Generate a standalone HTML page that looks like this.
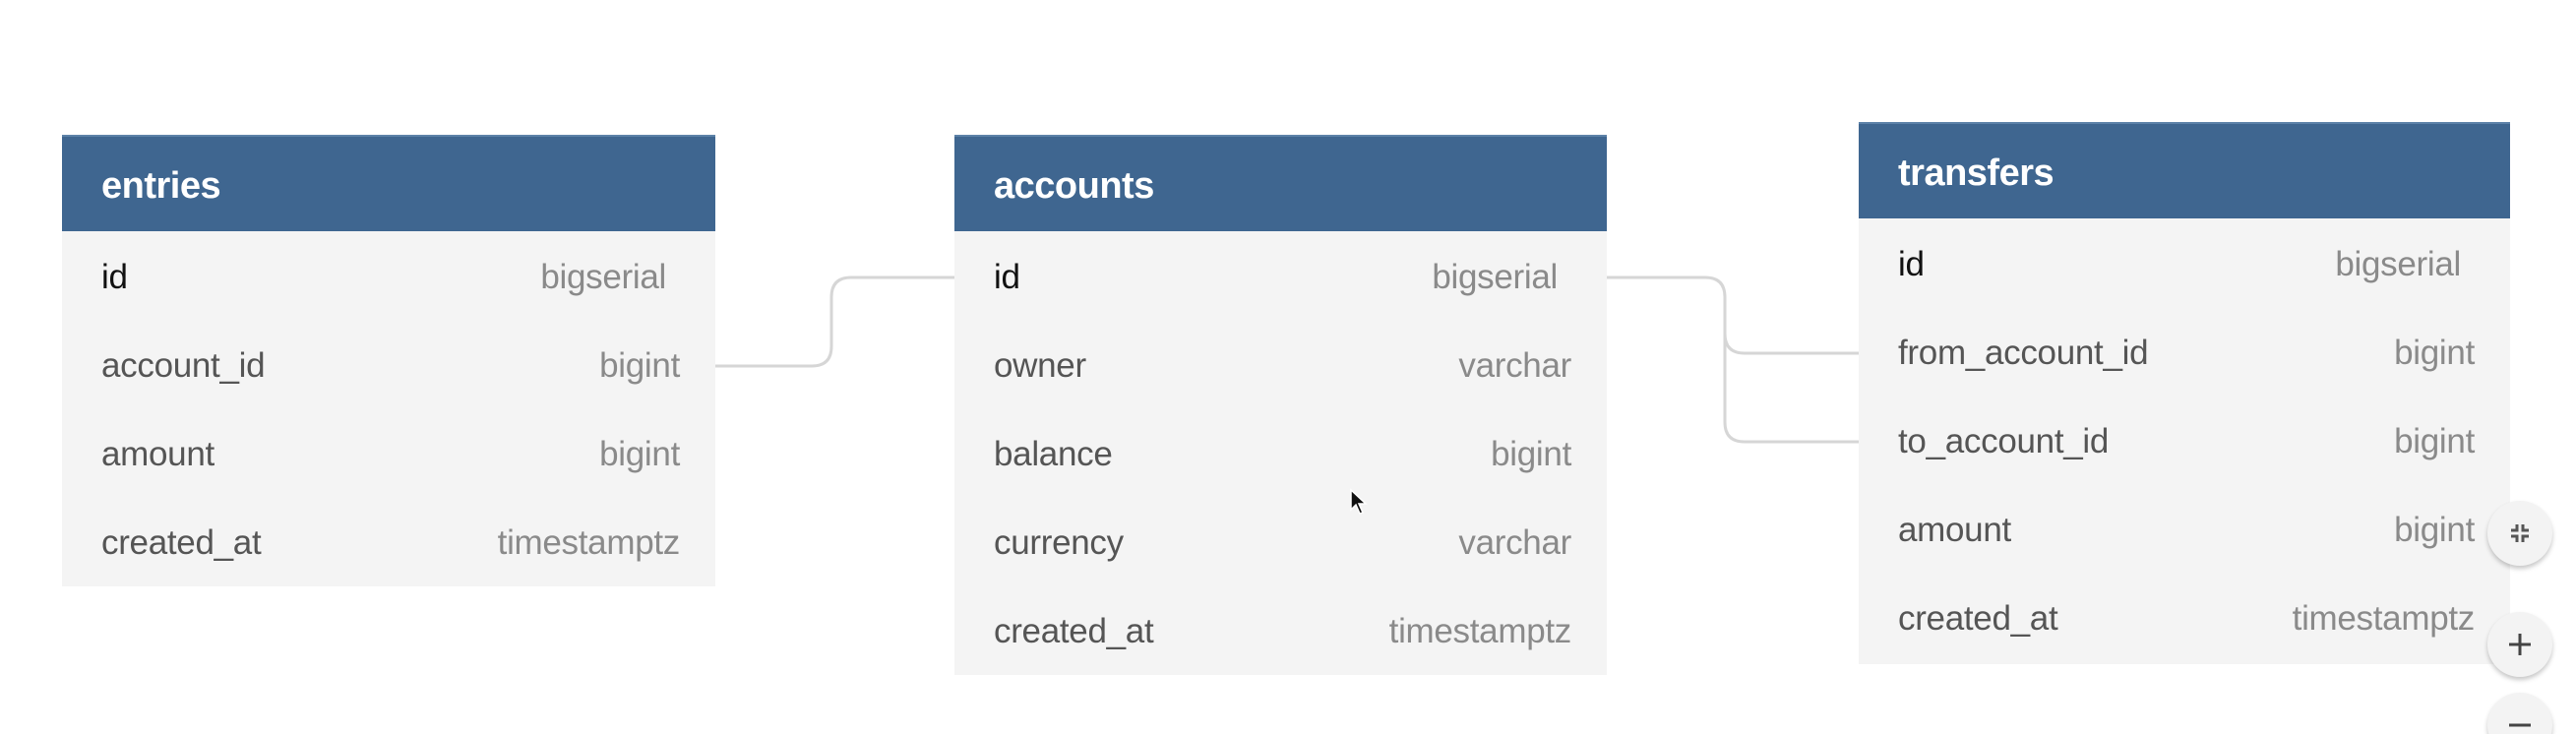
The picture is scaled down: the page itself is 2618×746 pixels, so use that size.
<!DOCTYPE html>
<html><head><meta charset="utf-8"><style>
html,body{margin:0;padding:0;background:#fff;width:2618px;height:746px;overflow:hidden;position:relative;font-family:"Liberation Sans",sans-serif}
.t{position:absolute;background:#f4f4f4}
.h{height:98px;background:#3f6690;color:#fff;font-weight:bold;font-size:38px;line-height:100px;padding-left:40px;box-sizing:border-box;border-top:2px solid #5d82a8;letter-spacing:-0.5px}
.r{height:90px;line-height:94px;font-size:35px;color:#555;padding:0 36px 0 40px;display:flex;justify-content:space-between;letter-spacing:-0.3px}
.r span:last-child{color:#8a8a8a}
.r.k span:first-child{color:#111}
.r.k span:last-child{margin-right:14px}
.c{position:absolute;width:66px;height:66px;border-radius:50%;background:#f3f3f3;box-shadow:0 3px 5px rgba(0,0,0,.22);display:flex;align-items:center;justify-content:center;color:#444;font-size:40px}
</style></head><body>
<svg style="position:absolute;left:0;top:0" width="2618" height="746">
<g fill="none" stroke="#d6d6d6" stroke-width="3">
<path d="M727 372 H825 Q845 372 845 352 V302 Q845 282 865 282 H970"/>
<path d="M1633 282 H1733 Q1753 282 1753 302 V339 Q1753 359 1773 359 H1889"/>
<path d="M1753 330 V429 Q1753 449 1773 449 H1889"/>
</g>
</svg>
<div class="t" style="left:63px;top:137px;width:664px;height:459px">
<div class="h">entries</div>
<div class="r k"><span>id</span><span>bigserial</span></div>
<div class="r"><span>account_id</span><span>bigint</span></div>
<div class="r"><span>amount</span><span>bigint</span></div>
<div class="r"><span>created_at</span><span>timestamptz</span></div>
</div>
<div class="t" style="left:970px;top:137px;width:663px;height:549px">
<div class="h">accounts</div>
<div class="r k"><span>id</span><span>bigserial</span></div>
<div class="r"><span>owner</span><span>varchar</span></div>
<div class="r"><span>balance</span><span>bigint</span></div>
<div class="r"><span>currency</span><span>varchar</span></div>
<div class="r"><span>created_at</span><span>timestamptz</span></div>
</div>
<div class="t" style="left:1889px;top:124px;width:662px;height:551px">
<div class="h">transfers</div>
<div class="r k"><span>id</span><span>bigserial</span></div>
<div class="r"><span>from_account_id</span><span>bigint</span></div>
<div class="r"><span>to_account_id</span><span>bigint</span></div>
<div class="r"><span>amount</span><span>bigint</span></div>
<div class="r"><span>created_at</span><span>timestamptz</span></div>
</div>
<div class="c" style="left:2528px;top:509px"><svg width="24" height="24" viewBox="0 0 24 24" fill="none" stroke="#555" stroke-width="3"><path d="M9 3V9H3M15 3V9H21M9 21V15H3M15 21V15H21"/></svg></div>
<div class="c" style="left:2528px;top:622px"><svg width="26" height="26" viewBox="0 0 26 26" stroke="#444" stroke-width="3"><path d="M13 2V24M2 13H24"/></svg></div>
<div class="c" style="left:2528px;top:704px"><svg width="26" height="26" viewBox="0 0 26 26" stroke="#444" stroke-width="3"><path d="M2 13H24"/></svg></div>
<svg style="position:absolute;left:1370px;top:496px" width="20" height="28" viewBox="0 0 20 28"><path d="M3 2V22L8 17L12 26L15 25L11 16H18Z" fill="#111" stroke="#fff" stroke-width="1.5"/></svg>
</body></html>
